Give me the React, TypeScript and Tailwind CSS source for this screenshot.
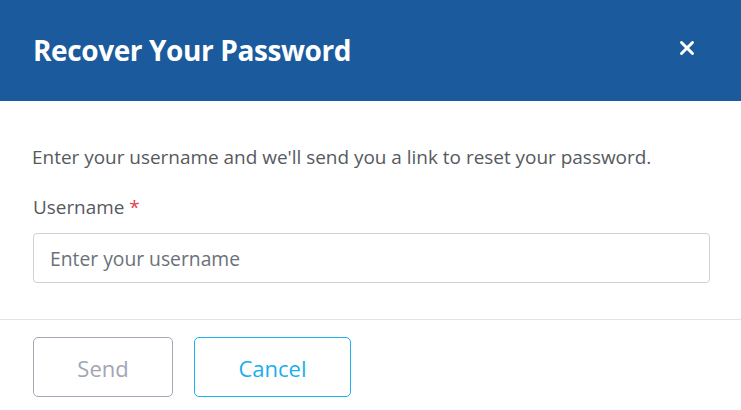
import { X } from "lucide-react";

export default function App() {
  return (
    <div className="w-[741px] h-[410px] bg-white overflow-hidden" style={{ fontFamily: '"Open Sans", "Noto Sans", sans-serif' }}>
      <div className="h-[101px] bg-[#1b5a9d] flex items-center justify-between pl-[33px] pr-[43px]">
        <h1 className="text-white text-[28px] font-bold tracking-[-0.4px] -mt-[2px]">Recover Your Password</h1>
        <button className="text-white -mt-[6px]">
          <X size={22} strokeWidth={3.2} />
        </button>
      </div>

      <div className="pl-[33px] pr-[31px] pt-[44px] pb-[36px] border-b border-[#e1e3e8]">
        <p className="text-[#555a60] text-[18.95px] leading-[24px] -ml-[1px]">
          Enter your username and we'll send you a link to reset your password.
        </p>
        <label className="block mt-[26px] text-[#555a60] text-[18.9px] leading-[24px]">
          Username <span className="text-[#e0414f]">*</span>
        </label>
        <input
          className="mt-[14px] w-full h-[50px] rounded-[4px] border border-[#cdd1d8] px-[16px] text-[19.3px] text-[#555a60] placeholder:text-[#6b717a] outline-none"
          placeholder="Enter your username"
        />
      </div>

      <div className="px-[33px] pt-[17px] flex gap-[21px]">
        <button className="w-[140px] h-[60px] rounded-[5px] border border-[#a6a8b5] text-[#a2a5b2] text-[22px] pt-[3px]">
          Send
        </button>
        <button className="w-[157px] h-[60px] rounded-[5px] border border-[#1fb0ee] text-[#1aaeea] text-[22px] pt-[3px]">
          Cancel
        </button>
      </div>
    </div>
  );
}
